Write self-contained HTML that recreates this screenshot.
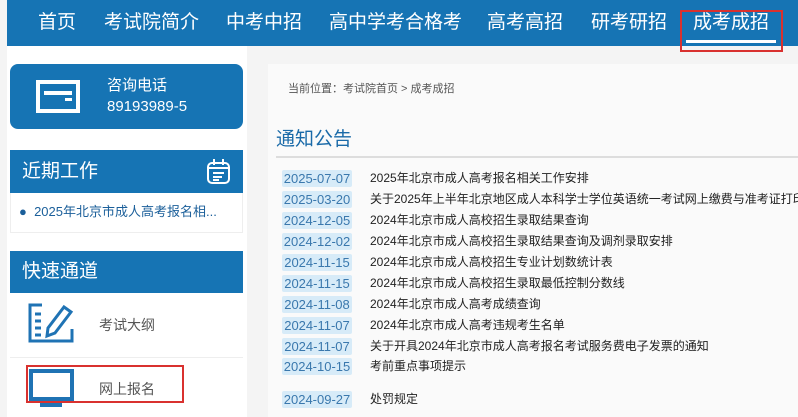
<!DOCTYPE html>
<html><head><meta charset="utf-8"><style>
*{margin:0;padding:0;box-sizing:border-box}
html,body{width:798px;height:417px;overflow:hidden}
body{background:#f4f4f4;font-family:"Liberation Sans","Noto Sans CJK SC",sans-serif;position:relative}
.a{position:absolute}
.nav{left:7px;top:0;width:791px;height:46px;background:#1674b4}
.nav span{position:absolute;top:11px;color:#fff;font-size:19px;white-space:nowrap;line-height:24px}
.left{left:7px;top:46px;width:240px;height:371px;background:#fff}
.blue{background:#1674b4;color:#fff}
.right{left:268px;top:64px;width:530px;height:353px;background:#fafafa;overflow:hidden}
.row{position:absolute;left:14px;height:17px;font-size:12px;color:#222;white-space:nowrap}
.row b{position:absolute;left:0;top:0;width:70px;height:17px;background:#d7ebf8;color:#3a78ad;font-weight:normal;font-size:13px;line-height:17px;text-align:center;border-radius:2px}
.row i{position:absolute;left:88px;top:0;font-style:normal;line-height:17px}
</style></head><body>
<div class="a nav">
<span style="left:31px">首页</span>
<span style="left:97px">考试院简介</span>
<span style="left:219px">中考中招</span>
<span style="left:322px">高中学考合格考</span>
<span style="left:480px">高考高招</span>
<span style="left:584px">研考研招</span>
<span style="left:686px">成考成招</span>
<div class="a" style="left:679px;top:40px;width:90px;height:3px;background:#fff"></div>
</div>
<div class="a" style="left:680px;top:10px;width:103px;height:42px;border:2px solid #d9312f"></div>
<div class="a left"></div>
<div class="a blue" style="left:10px;top:64px;width:233px;height:65px;border-radius:8px">
<div class="a" style="left:26px;top:16px;width:44px;height:33px;border:4px solid #fff"></div>
<div class="a" style="left:34px;top:27px;width:28px;height:4px;background:#fff"></div>
<div class="a" style="left:55px;top:34px;width:7px;height:3px;background:#fff"></div>
<div class="a" style="left:97px;top:13px;font-size:15px;line-height:18px">咨询电话</div>
<div class="a" style="left:97px;top:34px;font-size:15px;line-height:18px">89193989-5</div>
</div>
<div class="a blue" style="left:10px;top:150px;width:233px;height:43px">
<div class="a" style="left:12px;top:10px;font-size:19px;line-height:24px">近期工作</div>
<svg class="a" style="left:196px;top:8px" width="26" height="27" viewBox="0 0 26 27" fill="none" stroke="#fff" stroke-width="2"><rect x="2" y="5" width="21" height="20" rx="4"/><path d="M2 10h21M8 1v6M17 1v6M7 15h11M7 19h9M7 22h6"/></svg>
</div>
<div class="a" style="left:10px;top:193px;width:233px;height:40px;border:1px solid #eee;border-top:none"></div>
<div class="a" style="left:19px;top:203px;font-size:13px;color:#1b5f9a;white-space:nowrap;line-height:18px">●&nbsp; 2025年北京市成人高考报名相...</div>
<div class="a blue" style="left:10px;top:251px;width:233px;height:42px">
<div class="a" style="left:12px;top:9px;font-size:19px;line-height:24px">快速通道</div>
</div>
<svg class="a" style="left:28px;top:303px" width="46" height="40" viewBox="0 0 46 40" fill="none" stroke="#1f73b4" stroke-width="3"><path d="M14 2H2v36h42V26M7 11h6M7 18h6M7 25h6M7 32h6"/><path d="M36 4l7 5-16 21-8 3 1-8z"/></svg>
<div class="a" style="left:99px;top:315px;font-size:14px;color:#555">考试大纲</div>
<div class="a" style="left:10px;top:357px;width:233px;height:1px;background:#eee"></div>
<div class="a" style="left:29px;top:369px;width:45px;height:32px;border:4px solid #1f73b4"></div>
<div class="a" style="left:40px;top:403px;width:22px;height:4px;background:#1f73b4"></div>
<div class="a" style="left:99px;top:379px;font-size:14px;color:#555">网上报名</div>
<div class="a" style="left:26px;top:365px;width:158px;height:38px;border:2px solid #d9312f"></div>
<div class="a right">
<div class="a" style="left:20px;top:18px;font-size:11px;color:#555;line-height:14px;white-space:nowrap">当前位置：考试院首页 &gt; 成考成招</div>
<div class="a" style="left:8px;top:64px;font-size:19px;color:#1a6aa8;line-height:24px;white-space:nowrap">通知公告</div>
<div class="a" style="left:8px;top:92px;width:522px;height:2px;background:#ddd"></div>
<div class="row" style="top:106px"><b>2025-07-07</b><i>2025年北京市成人高考报名相关工作安排</i></div>
<div class="row" style="top:127px"><b>2025-03-20</b><i>关于2025年上半年北京地区成人本科学士学位英语统一考试网上缴费与准考证打印的通知</i></div>
<div class="row" style="top:148px"><b>2024-12-05</b><i>2024年北京市成人高校招生录取结果查询</i></div>
<div class="row" style="top:169px"><b>2024-12-02</b><i>2024年北京市成人高校招生录取结果查询及调剂录取安排</i></div>
<div class="row" style="top:190px"><b>2024-11-15</b><i>2024年北京市成人高校招生专业计划数统计表</i></div>
<div class="row" style="top:211px"><b>2024-11-15</b><i>2024年北京市成人高校招生录取最低控制分数线</i></div>
<div class="row" style="top:232px"><b>2024-11-08</b><i>2024年北京市成人高考成绩查询</i></div>
<div class="row" style="top:253px"><b>2024-11-07</b><i>2024年北京市成人高考违规考生名单</i></div>
<div class="row" style="top:274px"><b>2024-11-07</b><i>关于开具2024年北京市成人高考报名考试服务费电子发票的通知</i></div>
<div class="row" style="top:294px"><b>2024-10-15</b><i>考前重点事项提示</i></div>
<div class="row" style="top:327px"><b>2024-09-27</b><i>处罚规定</i></div>
</div>
</body></html>
